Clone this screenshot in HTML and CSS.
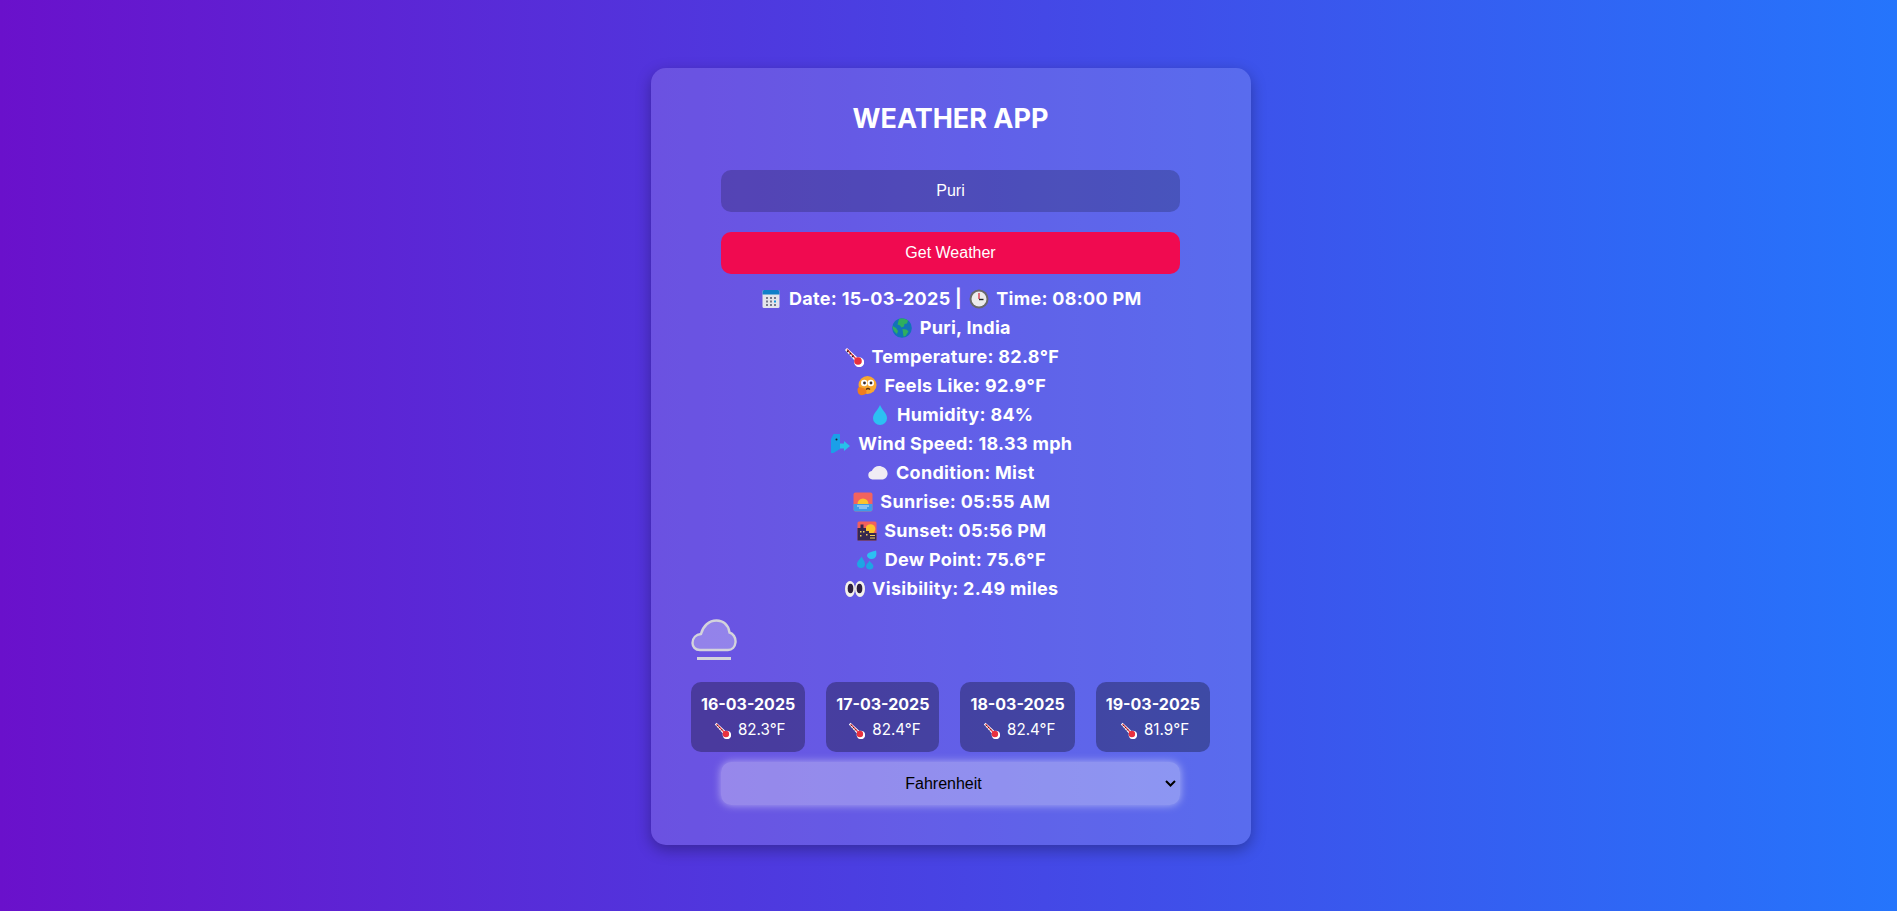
FILE: index.html
```html
<!DOCTYPE html>
<html lang="en">
<head>
    <meta charset="UTF-8">
    <meta name="viewport" content="width=device-width, initial-scale=1.0">
    <title>Weather App</title>
    <link rel="stylesheet" href="styles.css">
</head>
<body>

<svg class="sprites" xmlns="http://www.w3.org/2000/svg">
    <symbol id="calendar" viewBox="0 0 20 20">
        <rect x="1.500" y="1" width="17" height="18" rx="1.500" fill="#e4e4ea"/>
        <path d="M1.500 5.500V2.500A1.500 1.500 0 0 1 3 1h14a1.500 1.500 0 0 1 1.500 1.500V5.500z" fill="#0f7fc9"/>
        <path d="M5 8h2v2H5zM9 8h2v2H9zM13 8h2v2h-2zM5 11.500h2v2H5zM9 11.500h2v2H9zM5 15h2v2H5zM9 15h2v2H9zM13 15h2v2h-2z" fill="#77778a"/>
        <path d="M13 11.500h2v2h-2z" fill="#1296e0"/>
    </symbol>
    <symbol id="clock" viewBox="0 0 20 20">
        <circle cx="10" cy="10" r="9.500" fill="#68686c"/>
        <circle cx="10" cy="10" r="7.500" fill="#ececec"/>
        <path d="M10 4V10" stroke="#d81f3c" stroke-width="1.200"/>
        <path d="M10 10.500h4.500" stroke="#222" stroke-width="1.400"/>
    </symbol>
    <symbol id="globe" viewBox="0 0 20 20">
        <circle cx="10" cy="10" r="9.800" fill="#1272b8"/>
        <path d="M7 1c3-1 6-.5 9 1.500l-1 3-2.500.5-.5 2.500-2.500 1L8 7.500 5.500 6.500zM10.500 11l4 .5 2 2-3 4.500-2 .5-.5-3.500zM.5 8l3.500 2 2 3-1 3C2 14 .5 11 .5 8z" fill="#2fae5f"/>
    </symbol>
    <symbol id="thermo" viewBox="0 0 20 20">
        <path d="M1 3 3 1 13.500 10.500A5 5 0 1 1 10.500 13.500z" fill="#fff"/>
        <path d="M2.500 3 3.500 2 12 11 11 12z" fill="#e8313f"/>
        <path d="M4.500 3.500 3 5M7 6 5.500 7.500M9.500 8.500 8 10" stroke="#222" stroke-width="1.100"/>
        <circle cx="14" cy="14" r="3.800" fill="#e8313f"/>
    </symbol>
    <symbol id="face" viewBox="0 0 20 20">
        <circle cx="10.500" cy="9" r="9" fill="#f7a62f"/>
        <circle cx="7.200" cy="7" r="3.200" fill="#fff"/>
        <circle cx="13.800" cy="7" r="3.200" fill="#fff"/>
        <circle cx="7.500" cy="7" r="1.400" fill="#3a2a2a"/>
        <circle cx="14" cy="7" r="1.400" fill="#3a2a2a"/>
        <path d="M9 13.500q2-2 4 0" stroke="#5a3010" stroke-width="1.200" fill="none"/>
        <path d="M.5 13.500q0-2.500 2-2.500l3.500 1q3.500 .5 3.500 3.500t-3.500 3.500q-5.500 1-5.500-5.500z" fill="#ef7d1f"/>
    </symbol>
    <symbol id="drop" viewBox="0 0 20 20">
        <path d="M10 0C8 5 3 8.500 3 13.200a7 6.800 0 0 0 14 0C17 8.500 12 5 10 0z" fill="#2cc0f2"/>
    </symbol>
    <symbol id="wind" viewBox="0 0 20 20">
        <path d="M0 5 2.500 0H9V15L2.500 19H0z" fill="#1b9fe8"/>
        <path d="M9 9.500h4v-2.500l6 5-6 5v-2.500H9z" fill="#27c0ea"/>
        <circle cx="5.500" cy="5.500" r="1" fill="#123"/>
    </symbol>
    <symbol id="cloud" viewBox="0 0 20 20">
        <path d="M4.500 16.500a4.300 4.300 0 0 1-.8-8.500C5.500 4 10 2 13.500 3.500c4 1 6.500 4.500 6 8-.5 3-3 5-6 5z" fill="#f0ecf4"/>
    </symbol>
    <symbol id="sunrise" viewBox="0 0 20 20">
        <rect x="0.500" y="0.500" width="19" height="19" rx="2" fill="#f2635f"/>
        <path d="M.5 12h19v5.500a2 2 0 0 1-2 2h-15a2 2 0 0 1-2-2z" fill="#3f9be8"/>
        <path d="M4.500 12a5.500 5.500 0 0 1 11 0z" fill="#fbc32d"/>
        <path d="M4 14h12M6 16h8" stroke="#cfe6fa" stroke-width="1"/>
    </symbol>
    <symbol id="sunset" viewBox="0 0 20 20">
        <rect x="0.500" y="0.500" width="19" height="19" rx="1.500" fill="#f0605c"/>
        <circle cx="13.500" cy="8" r="4.800" fill="#fbc32d"/>
        <path d="M.5 7h3V3.500h3V7h2.500v3H12v2h7.500v7.500H.5z" fill="#35284f"/>
        <path d="M3 10h1.500v1.500H3zM6 10h1.500v1.500H6zM3 14h1.500v1.500H3zM9 13h1.500v1.500H9zM13 14h5v1H13zM13 16.500h5v1H13z" fill="#f3cd58"/>
    </symbol>
    <symbol id="sweat" viewBox="0 0 20 20">
        <path d="M19 .5c1 4 .5 8.500-4.500 8.500-3 0-4.500-2-4.500-3.500 0-3 6-4 9-5z" fill="#2cc0f2"/>
        <path d="M4.500 6.500C3.500 9 0 11 0 14a4 4 0 0 0 8 0C8 11 5.500 9 4.500 6.500z" fill="#1fa5e4"/>
        <path d="M12.500 10.500c-1 2.500-3.500 3.500-3.500 6a3.800 3.500 0 0 0 7.500 0c0-2.500-3-3.500-4-6z" fill="#1fa5e4"/>
    </symbol>
    <symbol id="eyes" viewBox="0 0 20 20">
        <ellipse cx="5" cy="10" rx="5" ry="8" fill="#f4f1ea"/>
        <ellipse cx="15" cy="10" rx="5" ry="8" fill="#f4f1ea"/>
        <ellipse cx="5.500" cy="9.500" rx="2.800" ry="4.800" fill="#2e1f3f"/>
        <ellipse cx="14.500" cy="9.500" rx="2.800" ry="4.800" fill="#2e1f3f"/>
    </symbol>
</svg>

<div class="card">
    <h1>WEATHER APP</h1>

    <input class="field city" type="text" value="Puri">
    <button class="field get-btn" type="button">Get Weather</button>

    <div class="details">
        <p><svg class="emoji"><use href="#calendar"/></svg> Date: 15-03-2025 | <svg class="emoji"><use href="#clock"/></svg> Time: 08:00 PM</p>
        <p><svg class="emoji"><use href="#globe"/></svg> Puri, India</p>
        <p><svg class="emoji"><use href="#thermo"/></svg> Temperature: 82.8°F</p>
        <p><svg class="emoji"><use href="#face"/></svg> Feels Like: 92.9°F</p>
        <p><svg class="emoji"><use href="#drop"/></svg> Humidity: 84%</p>
        <p><svg class="emoji"><use href="#wind"/></svg> Wind Speed: 18.33 mph</p>
        <p><svg class="emoji"><use href="#cloud"/></svg> Condition: Mist</p>
        <p><svg class="emoji"><use href="#sunrise"/></svg> Sunrise: 05:55 AM</p>
        <p><svg class="emoji"><use href="#sunset"/></svg> Sunset: 05:56 PM</p>
        <p><svg class="emoji"><use href="#sweat"/></svg> Dew Point: 75.6°F</p>
        <p><svg class="emoji"><use href="#eyes"/></svg> Visibility: 2.49 miles</p>
    </div>

    <svg class="weather-icon" viewBox="0 0 46 44" fill="none">
        <path d="M9 32C4 32 1.500 28.500 1.500 25 1.500 20 5 16.500 10 16 12 8 18 2.500 25.500 2.500 32.500 2.500 37.500 7 38.500 14.500 42 15.500 45 19.500 44.500 24.500 44 29 41 32 37 32Z" fill="rgba(255,255,255,.28)" stroke="#d3d3dc" stroke-width="2.400"/>
        <path d="M6 40.500h34" stroke="#d3d3dc" stroke-width="3"/>
    </svg>

    <div class="forecast">
        <div class="day">
            <strong>16-03-2025</strong>
            <span><svg class="emoji small"><use href="#thermo"/></svg> 82.3°F</span>
        </div>
        <div class="day">
            <strong>17-03-2025</strong>
            <span><svg class="emoji small"><use href="#thermo"/></svg> 82.4°F</span>
        </div>
        <div class="day">
            <strong>18-03-2025</strong>
            <span><svg class="emoji small"><use href="#thermo"/></svg> 82.4°F</span>
        </div>
        <div class="day">
            <strong>19-03-2025</strong>
            <span><svg class="emoji small"><use href="#thermo"/></svg> 81.9°F</span>
        </div>
    </div>

    <div class="unit-wrap">
        <select class="field unit">
            <option>Fahrenheit</option>
            <option>Celsius</option>
        </select>
        <svg class="chevron" viewBox="0 0 11 7" fill="none">
            <path d="M1 1l4.500 4.500L10 1" stroke="#000" stroke-width="2"/>
        </svg>
    </div>
</div>

</body>
</html>
```

FILE: styles.css
```css
body {
    box-sizing: border-box;
    margin: 0;
    padding: 2px 0 0 5px;
    height: 911px;
    overflow: hidden;
    display: flex;
    align-items: center;
    justify-content: center;
    background: linear-gradient(to right, #6a11cb, #2575fc);
    font-family: Inter, sans-serif;
    color: white;
}
.sprites {
    display: none;
}
.card {
    box-sizing: border-box;
    width: 600px;
    height: 777px;
    padding: 31px 41px 30px 40px;
    display: flex;
    flex-direction: column;
    align-items: center;
    background: rgba(255, 255, 255, 0.15);
    border-radius: 15px;
    box-shadow: 0 5px 15px rgba(0, 0, 0, 0.3);
}
h1 {
    margin: 0 0 31px;
    font-size: 27px;
    line-height: 40px;
    font-weight: 700;
}
.field {
    box-sizing: border-box;
    width: 459px;
    height: 42px;
    border: none;
    border-radius: 10px;
    font-family: "Liberation Sans", Arial, sans-serif;
    font-size: 16px;
    text-align: center;
    flex-shrink: 0;
}
.city {
    margin-bottom: 20px;
    background: rgba(0, 0, 0, 0.2);
    color: white;
}
.get-btn {
    background: #f00a50;
    color: white;
}
.details {
    margin-top: 10px;
    width: 100%;
}
.details p {
    margin: 0;
    text-align: center;
    font-size: 18px;
    line-height: 29px;
    font-weight: 700;
    letter-spacing: 0.3px;
    white-space: nowrap;
}
.emoji {
    width: 20px;
    height: 20px;
    margin: 0 3px 0 2px;
    vertical-align: -4px;
}
.emoji.small {
    width: 17px;
    height: 17px;
    margin: 0 3px;
}
.weather-icon {
    align-self: flex-start;
    width: 46px;
    height: 44px;
    margin-top: 15px;
}
.forecast {
    width: 100%;
    margin-top: 20px;
    display: flex;
    justify-content: space-between;
}
.day {
    height: 70px;
    padding: 10px;
    box-sizing: border-box;
    display: flex;
    flex-direction: column;
    align-items: center;
    background: rgba(0, 0, 0, 0.3);
    border-radius: 10px;
    font-size: 15.200px;
    line-height: 25px;
    white-space: nowrap;
}
.day strong {
    font-size: 16px;
    font-weight: 700;
}
.unit-wrap {
    position: relative;
    margin-top: 10px;
}
.unit {
    display: block;
    height: 43px;
    padding: 0 14px 0 0;
    appearance: none;
    color: black;
    background: rgba(255, 255, 255, 0.3);
    box-shadow: 0 0 8px rgba(255, 255, 255, 0.5);
}
/* sits over the select, native arrow is in the wrong place */
.chevron {
    position: absolute;
    top: 18px;
    right: 4px;
    width: 11px;
    height: 7px;
    pointer-events: none;
}
```
